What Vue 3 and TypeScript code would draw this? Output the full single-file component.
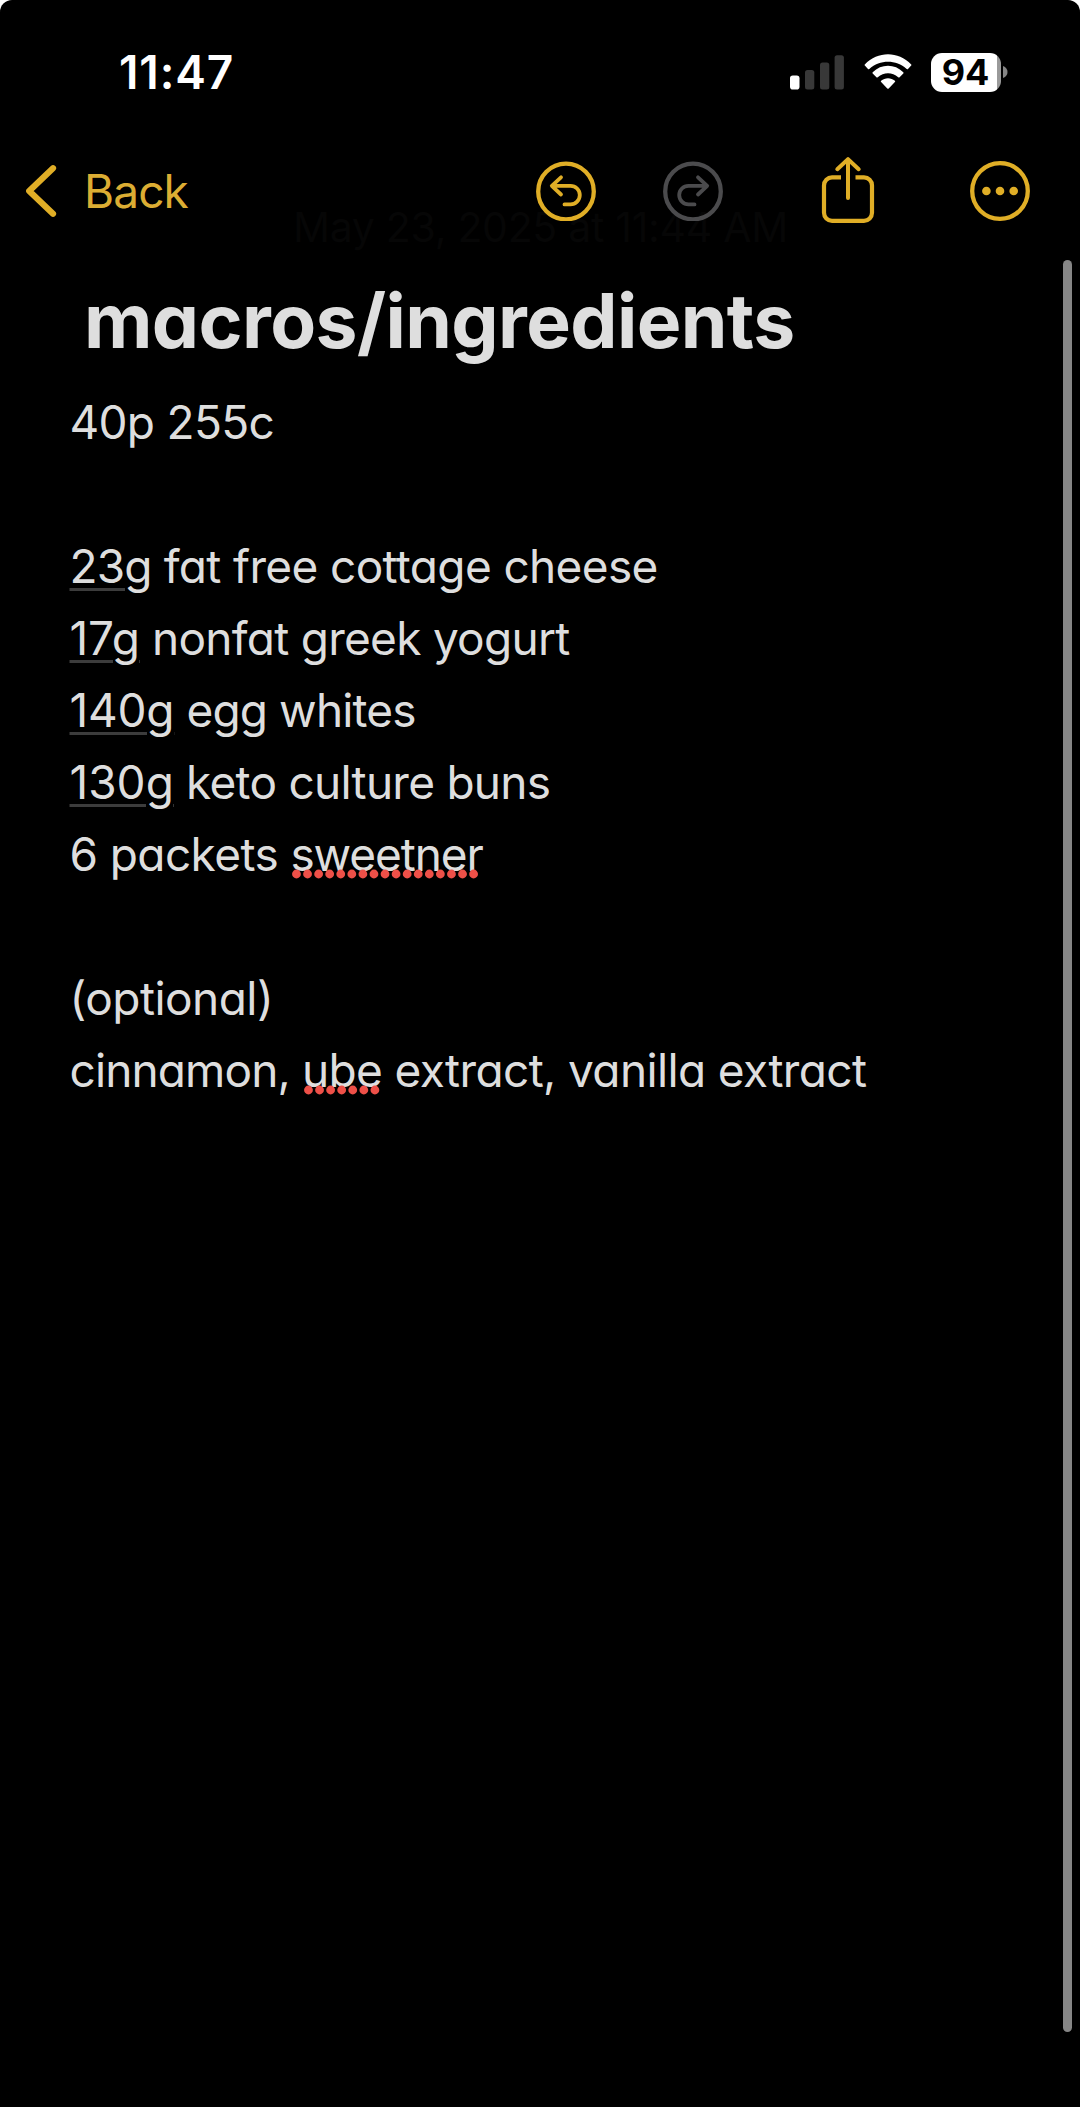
<script setup lang="ts">
interface Part {
  text: string
  spacing: number
  kind?: 'data' | 'typo'
  dots?: number
}

const title = 'macros/ingredients'
const time = '11:47'
const battery = 94

const lines: Part[][] = [
  [{ text: '40p 255c', spacing: -0.7 }],
  [],
  [{ text: '23g', kind: 'data', spacing: -0.9 }, { text: ' fat free cottage cheese', spacing: -0.64 }],
  [{ text: '17g', kind: 'data', spacing: -0.1 }, { text: ' nonfat greek yogurt', spacing: -0.73 }],
  [{ text: '140g', kind: 'data', spacing: -0.2 }, { text: ' egg whites', spacing: -0.87 }],
  [{ text: '130g', kind: 'data', spacing: 0 }, { text: ' keto culture buns', spacing: -0.74 }],
  [{ text: '6 packets ', spacing: -0.6 }, { text: 'sweetner', kind: 'typo', dots: 17, spacing: -1.1 }],
  [],
  [{ text: '(optional)', spacing: -0.54 }],
  [
    { text: 'cinnamon, ', spacing: -0.87 },
    { text: 'ube', kind: 'typo', dots: 7, spacing: -0.67 },
    { text: ' extract, vanilla extract', spacing: -0.62 },
  ],
]
</script>

<template>
  <main class="screen">
    <header class="status">
      <span class="time">{{ time }}</span>
      <div class="indicators">
        <svg class="signal" width="54" height="35" viewBox="0 0 54 35">
          <rect x="0" y="20.5" width="9.5" height="14" rx="2.8" fill="#fff" />
          <rect x="15" y="15" width="9.3" height="19.5" rx="2.5" fill="#383838" />
          <rect x="30" y="7.5" width="9.3" height="27" rx="2.5" fill="#383838" />
          <rect x="44.6" y="0.3" width="9.3" height="34.2" rx="2.5" fill="#383838" />
        </svg>
        <svg class="wifi" width="48" height="36" viewBox="0 0 48 36" fill="#fff">
          <path d="M.8 10.4C13.8-3.2 34.2-3.2 47.2 10.4Q47.7 11 47.2 11.6L44 15Q43.4 15.6 42.7 15C32 5.3 16 5.3 5.3 15Q4.6 15.6 4 15L.8 11.6Q.3 11 .8 10.4Z" />
          <path d="M8.7 18.2C17.3 9.6 30.7 9.6 39.3 18.2Q39.9 18.9 39.3 19.5L35.6 23.2Q35 23.8 34.2 23.2C28.3 17.9 19.7 17.9 13.8 23.2Q13 23.8 12.4 23.2L8.7 19.5Q8.1 18.9 8.7 18.2Z" />
          <path d="M17.1 26.8C21 23.4 27 23.4 30.9 26.8Q31.6 27.4 30.9 28.1L24.7 34.4Q24 35 23.3 34.4L17.1 28.1Q16.4 27.4 17.1 26.8Z" />
        </svg>
        <div class="battery">
          <div class="cell">{{ battery }}</div>
          <svg width="5" height="12" viewBox="0 0 5 12"><path d="M0 0Q4.5 1.8 4.5 6T0 12Z" fill="#858585" /></svg>
        </div>
      </div>
    </header>

    <nav class="toolbar">
      <div class="back">
        <svg width="32" height="54" viewBox="0 0 32 54" class="ink">
          <path d="M28 4.2 4.2 27 28 49.8" stroke-width="6.2" />
        </svg>
        <span>Back</span>
      </div>
      <div class="actions">
        <svg class="ink" width="60" height="60" viewBox="0 0 60 60">
          <circle cx="30" cy="30.5" r="27.8" stroke-width="4.3" />
          <path d="M25 16.3 15.8 24.8 25 33.5M16.5 24.8H34.5a9.3 9.3 0 0 1 0 18.6H28.5" stroke-width="3.8" />
        </svg>
        <svg class="ink muted" width="60" height="60" viewBox="0 0 60 60">
          <circle cx="30" cy="30.5" r="27.8" stroke-width="4.3" />
          <path d="M35 16.3 44.2 24.8 35 33.5M43.5 24.8H25.5a9.3 9.3 0 0 0 0 18.6H31.5" stroke-width="3.8" />
        </svg>
        <svg class="ink share" width="54" height="68" viewBox="0 0 54 68">
          <path d="M20 21.4H11A8 8 0 0 0 3 29.4V56.8A8 8 0 0 0 11 64.8H43A8 8 0 0 0 51 56.8V29.4A8 8 0 0 0 43 21.4H34.5" stroke-width="4.2" stroke-linecap="butt" />
          <path d="M27 3.5V42M16.3 13.2 27 3.2 37.7 13.2" stroke-width="4" />
        </svg>
        <svg class="ink more" width="60" height="60" viewBox="0 0 60 60">
          <circle cx="30" cy="30" r="27.8" stroke-width="4.3" />
          <g fill="#e0ae26" stroke="none">
            <circle cx="16.4" cy="30" r="4.3" />
            <circle cx="30" cy="30" r="4.3" />
            <circle cx="43.7" cy="30" r="4.3" />
          </g>
        </svg>
      </div>
      <span class="date">May 23, 2025 at 11:44 AM</span>
    </nav>

    <article class="note">
      <h1>{{ title }}</h1>
      <p v-for="(line, i) in lines" :key="i">
        <span
          v-for="(part, j) in line"
          :key="j"
          :class="part.kind"
          :style="{ letterSpacing: part.spacing + 'px' }"
        >{{ part.text }}<svg
          v-if="part.dots" class="dots" :width="part.dots * 11.07 + 3" height="10"
        ><circle v-for="n in part.dots" :key="n" :cx="n * 11.07 - 4.6" cy="5" r="4.4" /></svg></span>
      </p>
    </article>
    <div class="scrollbar"></div>
  </main>
</template>

<style>
body {
  background: #fff;
}
</style>

<style scoped>
.screen {
  position: relative;
  box-sizing: border-box;
  width: 1080px;
  height: 2107px;
  background: #000;
  border-radius: 12px 12px 0 0;
  overflow: hidden;
  font-family: Inter, "Liberation Sans", sans-serif;
}
.status {
  display: flex;
  justify-content: space-between;
  align-items: center;
  height: 144px;
  padding: 0 72px 0 119px;
  box-sizing: border-box;
}
.time {
  color: #fff;
  font-size: 46px;
  font-weight: 600;
  line-height: 56px;
  letter-spacing: 0.9px;
}
.indicators {
  display: flex;
  align-items: center;
}
.wifi {
  margin-left: 20px;
}
.battery {
  display: flex;
  align-items: center;
  gap: 2px;
  margin-left: 19px;
}
.cell {
  width: 70px;
  height: 39px;
  border-radius: 11px;
  background: linear-gradient(to right, #fff 66px, #9a9a9a 66px);
  color: #000;
  font-size: 36px;
  line-height: 39px;
  font-weight: 700;
  text-indent: -1px;
  text-align: center;
}
.toolbar {
  position: relative;
  z-index: 0;
  display: flex;
  justify-content: space-between;
  align-items: center;
  height: 94px;
  padding: 0 50px 0 25px;
}
.ink {
  display: block;
  fill: none;
  stroke: #e0ae26;
  stroke-linecap: round;
  stroke-linejoin: round;
}
.ink.muted {
  stroke: #4b4b4d;
}
.back {
  display: flex;
  align-items: center;
  gap: 27px;
  color: #dcad33;
  font-size: 46px;
  line-height: 56px;
  letter-spacing: -0.9px;
}
.actions {
  display: flex;
  align-items: center;
}
.muted {
  margin-left: 67px;
}
.share {
  margin: -2px 0 0 98px;
}
.more {
  margin-left: 95px;
}
.date {
  position: absolute;
  left: 293px;
  top: 58px;
  z-index: -1;
  color: #060606;
  font-size: 41px;
  line-height: 50px;
  letter-spacing: -0.3px;
  white-space: nowrap;
}
.note {
  padding: 38px 0 0 69.5px;
  color: #dedede;
  font-feature-settings: "cv11" 1;
}
h1 {
  margin: 0 0 20px;
  padding-left: 14.5px;
  font-size: 75px;
  line-height: 90px;
  font-weight: 700;
  letter-spacing: -0.6px;
  white-space: nowrap;
}
p {
  display: flex;
  margin: 0;
  height: 72px;
  font-size: 46px;
  line-height: 72px;
  white-space: pre;
}
.data {
  text-decoration: underline #3c3c3c 2.5px;
  text-underline-offset: 4.5px;
}
.typo {
  position: relative;
}
.dots {
  position: absolute;
  left: 0;
  top: 51px;
  fill: #ee5048;
}
.scrollbar {
  position: absolute;
  left: 1063px;
  top: 260px;
  width: 9px;
  height: 1772px;
  border-radius: 5px;
  background: #868686;
}
</style>
